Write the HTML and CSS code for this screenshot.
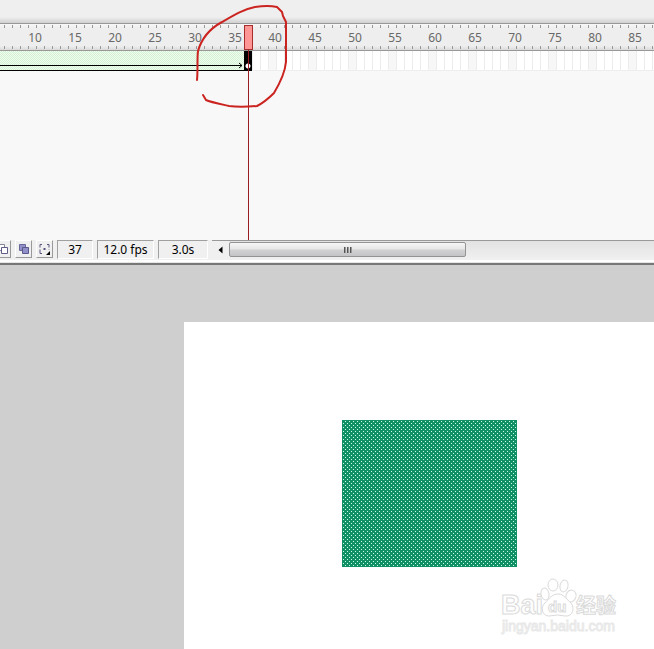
FILE: index.html
```
<!DOCTYPE html>
<html lang="zh-CN">
<head>
<meta charset="utf-8">
<title>Timeline</title>
<link rel="stylesheet" href="styles.css">
</head>
<body>
<section class="timeline">
  <div class="titlebar"></div>
  <div class="ruler">
    <span>10</span><span>15</span><span>20</span><span>25</span><span>30</span><span>35</span><span>40</span><span>45</span><span>50</span><span>55</span><span>60</span><span>65</span><span>70</span><span>75</span><span>80</span><span>85</span>
  </div>
  <div class="track">
    <div class="tween">
      <svg class="arrow" width="6" height="7" viewBox="0 0 6 7"><path d="M2 1L5 3.500L2 6" fill="none" stroke="#000"/></svg>
    </div>
    <div class="keyframe"></div>
    <div class="frames"></div>
  </div>
  <div class="layers"></div>
  <div class="playhead"></div>
  <svg class="annotation" width="100" height="110" viewBox="0 0 100 110"><path d="M7 80C8 70 7 58 8 51C12 37 21 28 32 22C44 15 54 9 65 7Q78 5 87 7L92 12L93 16L96 22V62C95 72 90 83 84 93C78 99 73 103 67 106C56 107 46 107 39 106C30 104 20 102 16 100L13 95"/></svg>
</section>
<div class="status">
  <button class="tool" type="button" aria-label="Onion skin outlines"><svg width="15" height="16" viewBox="0 0 15 16"><path d="M3.500 3.500h6v6h-6z" fill="#fff" stroke="#858598"/><path d="M6.500 6.500h6v6h-6z" fill="#fff" stroke="#5f5c87"/></svg></button>
  <button class="tool" type="button" aria-label="Edit multiple frames"><svg width="15" height="16" viewBox="0 0 15 16"><path d="M3.500 3.500h6v6h-6z" fill="#9290c8" stroke="#69679a"/><path d="M6.500 6.500h6v6h-6z" fill="#9290c8" stroke="#5b588b"/></svg></button>
  <button class="tool" type="button" aria-label="Modify markers"><svg width="15" height="16" viewBox="0 0 15 16"><path d="M5 3.500H3V12.500H5M10 3.500h2V9" fill="none" stroke="#56547f" stroke-dasharray="5 2 9"/><path d="M6.500 7h2v2h-2z" fill="#56547f"/><path d="M13 10v4H9z"/></svg></button>
  <output class="field current">37</output>
  <output class="field rate">12.0 fps</output>
  <output class="field elapsed">3.0s</output>
  <div class="scroll">
    <button class="back" type="button" aria-label="Scroll left"><svg width="5" height="8" viewBox="0 0 5 8"><path d="M4.500 0.500v7L0.500 4z"/></svg></button>
    <div class="thumb"><i></i><i></i><i></i></div>
  </div>
</div>
<main class="workspace">
  <div class="stage">
    <div class="shape"></div>
    <svg class="watermark" width="124" height="64" viewBox="0 0 124 64">
      <g fill="#fff" stroke="#dadada">
        <text class="brand" x="3" y="38">Bai</text>
        <ellipse cx="47" cy="18" rx="4" ry="6" transform="rotate(-12 47 18)"/>
        <ellipse cx="55" cy="9" rx="5" ry="6"/>
        <ellipse cx="66" cy="10" rx="4" ry="6" transform="rotate(12 66 10)"/>
        <ellipse cx="73" cy="20" rx="5" ry="6" transform="rotate(20 73 20)"/>
        <path d="M60 18C54 18 51 23 47 27C42 31 44 40 51 40Q60 38 67 40C75 41 77 32 73 27C68 23 66 18 60 18Z"/>
        <text class="du" x="50" y="36">du</text>
        <text class="cn" x="78" y="37">经验</text>
        <text class="url" x="4" y="55">jingyan.baidu.com</text>
      </g>
    </svg>
  </div>
</main>
</body>
</html>
```
FILE: styles.css
```
*, *::before { box-sizing: border-box; }

body {
  margin: 0;
  min-height: 100vh;
  display: flex;
  flex-direction: column;
  overflow: hidden;
  background: #cfcfcf;
  color: #000;
  font: 12px/16px "Noto Sans", "Open Sans", sans-serif;
}

.timeline {
  position: relative;
  background: #f8f8f8;
}

.titlebar {
  height: 24px;
  border-bottom: 1px solid #989898;
  background: linear-gradient(#efefef 17px, #d0d0d0 23px);
}

.ruler {
  display: flex;
  height: 27px;
  padding: 6px 0 0 15px;
  overflow: hidden;
  border-bottom: 1px solid #989898;
  color: #696969;
  background:
    repeating-linear-gradient(90deg, transparent 0 4px, #999 4px 5px, transparent 5px 8px) 0 1px / 100% 3px no-repeat,
    repeating-linear-gradient(90deg, transparent 0 4px, #999 4px 5px, transparent 5px 8px) 0 22px / 100% 3px no-repeat,
    linear-gradient(#f8f8f8, #eee 4px, #eee 22px, #dadada);
}

.ruler span {
  flex: 0 0 40px;
  text-align: center;
}

.track {
  display: flex;
  height: 20px;
}

.tween {
  position: relative;
  flex: 0 0 244px;
  border-bottom: 1px solid #000;
  background:
    linear-gradient(#000, #000) 0 14px / 242px 1px no-repeat,
    conic-gradient(#d5f2d5 25%, #eefdee 0 50%, #d5f2d5 0 75%, #eefdee 0) 0 0 / 2px 2px;
}

.arrow {
  position: absolute;
  right: 1px;
  top: 11px;
}

.keyframe {
  flex: 0 0 8px;
  background: radial-gradient(circle at 4px 15px, #fff 2px, #000 3px);
}

.frames {
  flex: 1;
  border-bottom: 1px solid #eee;
  background:
    repeating-linear-gradient(90deg, #ececec 0 1px, transparent 1px 8px),
    repeating-linear-gradient(90deg, #fff 0 16px, #f7f7f7 16px 24px, #fff 24px 40px);
}

.layers { height: 169px; }

.playhead {
  position: absolute;
  left: 244px;
  top: 25px;
  bottom: 0;
  width: 9px;
  background: linear-gradient(#991f24, #991f24) 4px 25px / 1px 100% no-repeat;
}

.playhead::before {
  content: "";
  display: block;
  height: 25px;
  border: 1px solid #a92c2c;
  background: #ff9696;
}

.annotation {
  position: absolute;
  left: 190px;
  top: 0;
  fill: none;
  stroke: #cb2420;
  stroke-width: 2;
  stroke-linecap: round;
  stroke-linejoin: round;
}

.status {
  display: flex;
  height: 25px;
  padding-bottom: 5px;
  border-bottom: 2px solid #777;
  background: linear-gradient(#f0f0f0 20px, #fff 20px 22px, #e5e5e5 22px);
}

.tool {
  flex: 0 0 17px;
  height: 18px;
  margin-right: 4px;
  padding: 0;
  border: 1px solid #fff;
  border-right-color: #999;
  border-bottom-color: #999;
  background: #f0f0f0;
}

.tool:first-child { margin-left: -6px; }

.tool svg { display: block; }

.field {
  height: 19px;
  margin-right: 4px;
  border: 1px solid #a0a0a0;
  border-right-color: #fff;
  border-bottom-color: #fff;
  text-align: center;
  line-height: 18px;
}

.current { flex: 0 0 36px; }
.rate { flex: 0 0 57px; }
.elapsed { flex: 0 0 50px; }

.scroll {
  display: flex;
  flex: 1;
  height: 18px;
  border-top: 1px solid #999;
  background: linear-gradient(#e2e2e2, #efefef);
}

.back {
  flex: 0 0 17px;
  padding: 0;
  border: 0;
  background: #f0f0f0;
}

.thumb {
  display: flex;
  align-items: center;
  justify-content: center;
  gap: 1px;
  width: 237px;
  height: 15px;
  margin-top: 1px;
  border: 1px solid #939393;
  border-radius: 2px;
  background: linear-gradient(#f6f6f6, #e6e6e6 6px, #d2d2d4 7px, #c4c4c7);
}

.thumb i {
  width: 2px;
  height: 6px;
  background: linear-gradient(90deg, #555 1px, #999 1px);
}

.workspace {
  flex: 1;
  display: flex;
  padding: 57px 0 0 184px;
}

.stage {
  position: relative;
  flex: 1;
  padding: 98px 0 0 158px;
  background: #fff;
}

.shape {
  width: 175px;
  height: 147px;
  background:
    conic-gradient(at 1px 1px, transparent 75%, #c5ffe5 0) 3px 1px / 4px 4px,
    conic-gradient(at 1px 1px, transparent 75%, #c5ffe5 0) 1px 3px / 4px 4px,
    #119066;
}

.watermark {
  position: absolute;
  right: 32px;
  bottom: 9px;
}

.brand { font: bold 27px "Liberation Sans", sans-serif; }
.du { font: bold 15px "Liberation Sans", sans-serif; }
.cn { font: bold 20px "Noto Sans CJK SC", sans-serif; }
.url { font: 14px "Liberation Sans", sans-serif; stroke: #e8e8e8; }
```
